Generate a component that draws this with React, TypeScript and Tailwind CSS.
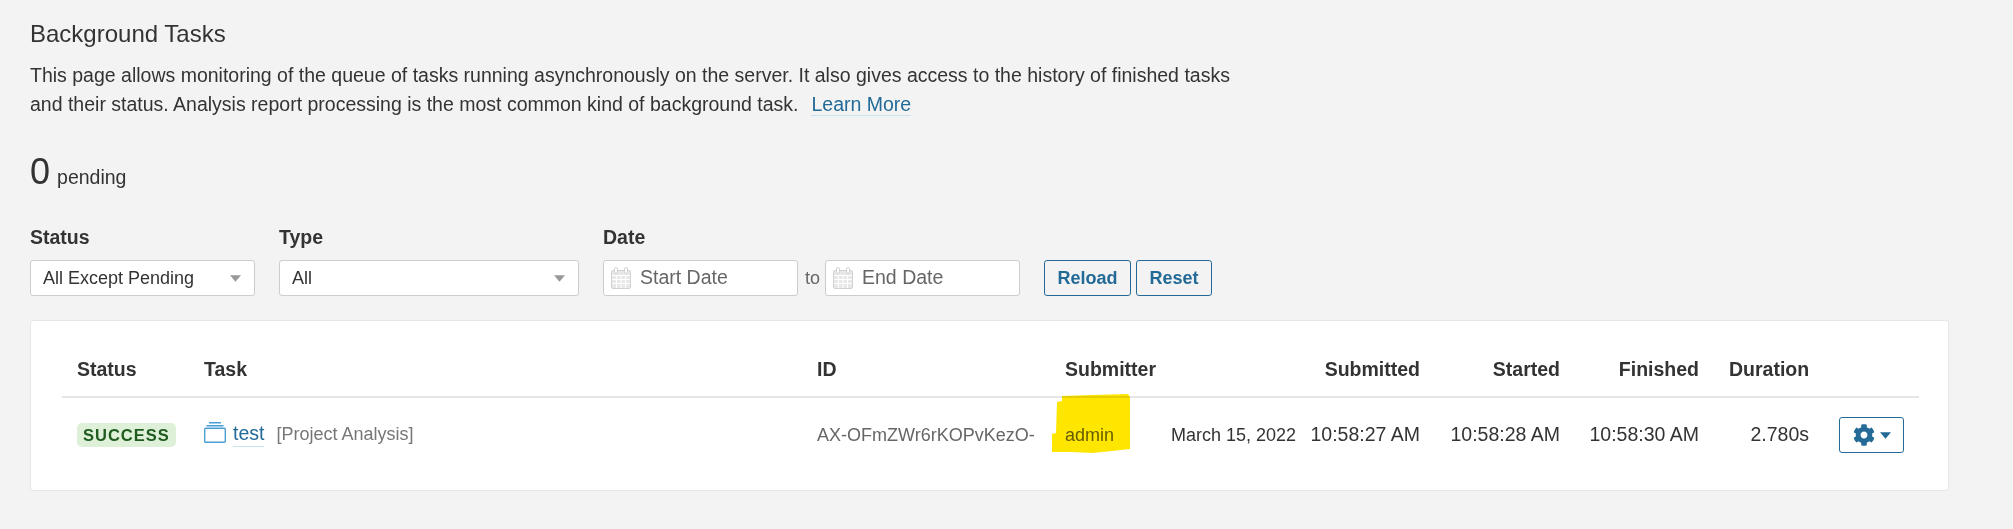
import { FaCog } from "react-icons/fa";

function Caret({ className }: { className: string }) {
  return (
    <svg viewBox="0 0 10 6" className={className} fill="currentColor">
      <path d="M0 0h10L5 6z" />
    </svg>
  );
}

function CalendarIcon() {
  return (
    <svg viewBox="0 0 20 22" className="h-[22px] w-[20px] shrink-0 text-[#d2d2d2]" fill="none" stroke="currentColor">
      <rect x="0.5" y="3.5" width="19" height="18" rx="1.5" fill="#e8e8e8" />
      <path d="M1 8.5h18M1 12.5h18M1 16.5h18M5.5 8v13M10 8v13M14.5 8v13" stroke="#fff" />
      <rect x="3.5" y="0.5" width="3" height="6" rx="1.5" fill="#fff" />
      <rect x="13.5" y="0.5" width="3" height="6" rx="1.5" fill="#fff" />
    </svg>
  );
}

function TaskIcon() {
  return (
    <svg viewBox="0 0 22 21" className="mb-[6px] h-[21px] w-[22px] shrink-0" fill="none" stroke="#4b9fd5" strokeWidth="1.4">
      <rect x="0.7" y="6.2" width="20.6" height="14" rx="1" />
      <path d="M2.5 3.7h17M5 0.8h12" />
    </svg>
  );
}

function Select({ value, width }: { value: string; width: string }) {
  return (
    <div className={`flex h-9 items-center justify-between rounded-[3px] border border-[#cdcdcd] bg-white pl-3 pr-[13px] text-[18px] ${width}`}>
      <span>{value}</span>
      <Caret className="h-[7px] w-[11px] text-[#999]" />
    </div>
  );
}

function DateInput({ placeholder }: { placeholder: string }) {
  return (
    <div className="flex h-9 w-[195px] items-center gap-[7px] rounded-[3px] border border-[#cdcdcd] bg-white pl-[7px]">
      <CalendarIcon />
      <input
        placeholder={placeholder}
        className="w-full bg-transparent pl-[2px] text-[19.5px] outline-none placeholder:text-[#666]"
      />
    </div>
  );
}

function Field({ label, children }: { label: string; children: React.ReactNode }) {
  return (
    <div>
      <label className="block h-[29px] text-[19.5px] leading-[29px] font-bold">{label}</label>
      <div className="mt-2 flex items-center">{children}</div>
    </div>
  );
}

function ActionButton({ children }: { children: string }) {
  return (
    <button
      type="button"
      className="h-9 rounded-[3px] border border-[#236a97] px-[12.5px] text-[18px] font-bold text-[#236a97]"
    >
      {children}
    </button>
  );
}

const headCell = "h-[76px] px-[15px] pt-[22px] text-[19.5px] font-bold";
const bodyCell = "h-[93px] px-[15px] pb-[18px]";

export default function App() {
  return (
    <div className="min-h-[529px] bg-[#f3f3f3] px-[30px] pt-[19px] font-['Liberation_Sans',Arial,sans-serif] text-[#333]">
      <h1 className="h-[30px] text-[24px] leading-[30px] font-normal">Background Tasks</h1>
      <p className="mt-[12px] max-w-[1215px] text-[19.5px] leading-[29px]">
        This page allows monitoring of the queue of tasks running asynchronously on the server. It also gives access to
        the history of finished tasks and their status. Analysis report processing is the most common kind of background
        task.
        <a className="ml-[13px] border-b border-[#cae3f2] text-[#236a97]">Learn More</a>
      </p>

      <div className="mt-[29px] flex h-[47px] items-baseline gap-[7px]">
        <span className="text-[36px] leading-[47px]">0</span>
        <span className="text-[19.5px]">pending</span>
      </div>

      <div className="mt-[28px] flex">
        <Field label="Status">
          <Select value="All Except Pending" width="w-[225px]" />
        </Field>
        <div className="ml-6">
          <Field label="Type">
            <Select value="All" width="w-[300px]" />
          </Field>
        </div>
        <div className="ml-6">
          <Field label="Date">
            <DateInput placeholder="Start Date" />
            <span className="mr-[5px] ml-[7px] text-[18px] text-[#666]">to</span>
            <DateInput placeholder="End Date" />
          </Field>
        </div>
        <div className="mt-[37px] ml-6 flex gap-[5px]">
          <ActionButton>Reload</ActionButton>
          <ActionButton>Reset</ActionButton>
        </div>
      </div>

      <div className="mt-6 w-[1919px] rounded-[3px] border border-[#e6e6e6] bg-white pr-[29px] pl-[31px]">
        <table className="w-full table-fixed border-collapse">
          <colgroup>
            <col className="w-[127px]" />
            <col className="w-[613px]" />
            <col className="w-[248px]" />
            <col className="w-[106px]" />
            <col className="w-[148px]" />
            <col className="w-[131px]" />
            <col className="w-[140px]" />
            <col className="w-[139px]" />
            <col className="w-[110px]" />
            <col />
          </colgroup>
          <thead>
            <tr className="border-b-2 border-[#e6e6e6] text-left">
              <th className={headCell}>Status</th>
              <th className={headCell}>Task</th>
              <th className={headCell}>ID</th>
              <th className={`${headCell} whitespace-nowrap`}>Submitter</th>
              <th className={headCell}></th>
              <th className={`${headCell} text-right`}>Submitted</th>
              <th className={`${headCell} text-right`}>Started</th>
              <th className={`${headCell} text-right`}>Finished</th>
              <th className={`${headCell} text-right`}>Duration</th>
              <th className={headCell}></th>
            </tr>
          </thead>
          <tbody>
            <tr>
              <td className={bodyCell}>
                <span className="inline-block h-6 rounded-[5px] bg-[#dff0d8] px-[6px] text-[16.5px] leading-6 font-bold tracking-[1px] text-[#1f5a1f]">
                  SUCCESS
                </span>
              </td>
              <td className={bodyCell}>
                <div className="flex items-center whitespace-nowrap">
                  <TaskIcon />
                  <a className="mb-1 ml-[7px] border-b border-[#cae3f2] text-[19.5px] leading-[26px] text-[#236a97]">test</a>
                  <span className="mb-[2px] ml-3 text-[18px] text-[#777]">[Project Analysis]</span>
                </div>
              </td>
              <td className={`${bodyCell} whitespace-nowrap text-[18px] text-[#666]`}>AX-OFmZWr6rKOPvKezO-</td>
              <td className={`${bodyCell} relative text-[18px] text-[#666]`}>
                admin
                {/* highlighter scribble drawn over the name */}
                <svg
                  viewBox="0 0 80 60"
                  className="absolute top-[-4px] left-[2px] h-[60px] w-[80px] mix-blend-multiply"
                  fill="#ffe600"
                >
                  <path d="M10 2 L40 1 L76 0 L78 3 L78 55 L60 57 L40 59 L20 58 L0 58 L0 40 L4 39 L5 8 L10 7Z" />
                </svg>
              </td>
              <td className={`${bodyCell} whitespace-nowrap pr-2 text-right text-[18px]`}>March 15, 2022</td>
              <td className={`${bodyCell} whitespace-nowrap pl-0 text-right text-[19.5px]`}>10:58:27 AM</td>
              <td className={`${bodyCell} whitespace-nowrap pl-0 text-right text-[19.5px]`}>10:58:28 AM</td>
              <td className={`${bodyCell} whitespace-nowrap pl-0 text-right text-[19.5px]`}>10:58:30 AM</td>
              <td className={`${bodyCell} text-right text-[19.5px]`}>2.780s</td>
              <td className={`${bodyCell} pl-0 text-right`}>
                <button
                  type="button"
                  className="inline-flex h-9 w-[65px] items-center justify-center gap-[5px] rounded-[3px] border border-[#236a97] text-[#236a97]"
                >
                  <FaCog className="h-[22px] w-[22px]" />
                  <Caret className="h-[7px] w-[11px]" />
                </button>
              </td>
            </tr>
          </tbody>
        </table>
      </div>
    </div>
  );
}
